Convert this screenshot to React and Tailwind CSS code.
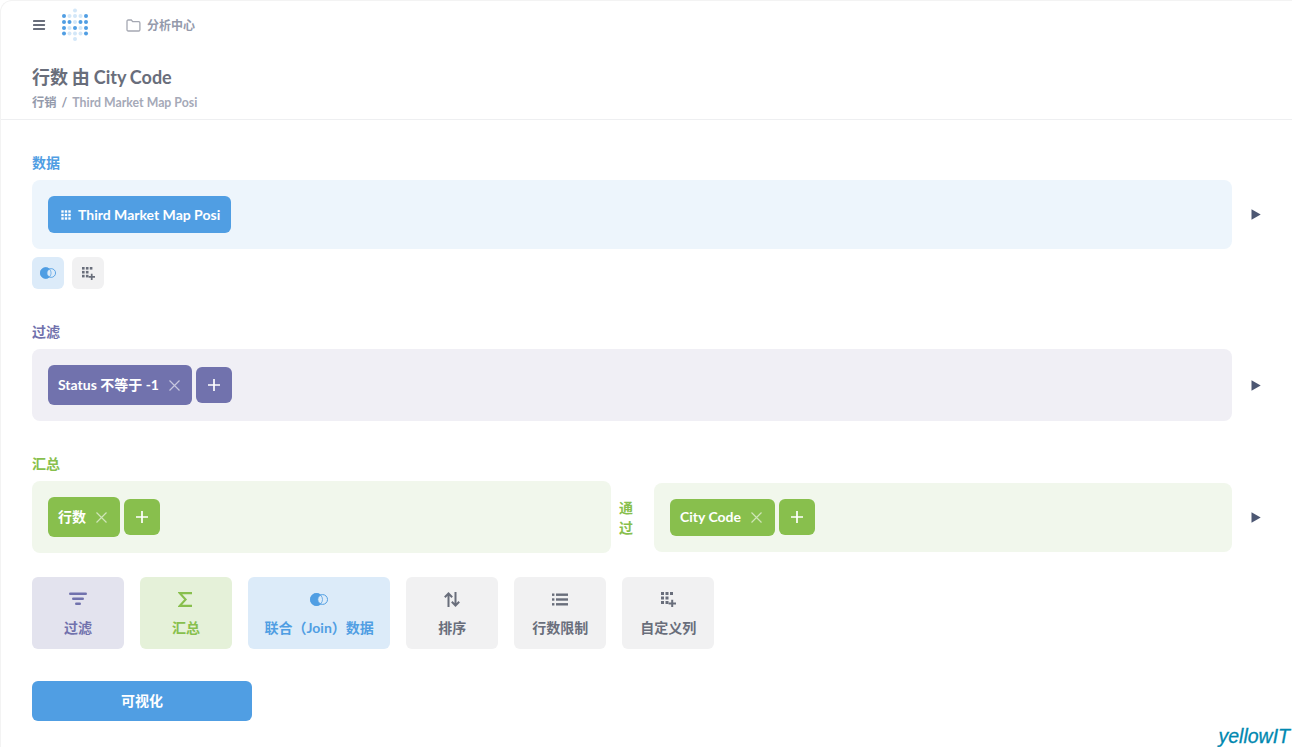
import React from "react";

const FONT = { fontFamily: "Lato, 'Noto Sans CJK SC', sans-serif" };

function Logo() {
  const cols = [64, 69.5, 75, 80.5, 86];
  const rows = [16, 22, 28, 33.5];
  const dark = new Set(["0-0","0-1","0-2","0-3","1-1","2-2","3-1","4-0","4-1","4-2","4-3"]);
  return (
    <svg width="30" height="34" viewBox="60 8 30 34" className="shrink-0">
      <circle cx="75" cy="10.5" r="2" fill="#509ee3" opacity="0.25" />
      <circle cx="75" cy="39" r="2" fill="#509ee3" opacity="0.25" />
      {cols.map((x, i) =>
        rows.map((y, j) => (
          <circle key={i + "-" + j} cx={x} cy={y} r="2" fill="#509ee3" opacity={dark.has(i + "-" + j) ? 1 : 0.25} />
        ))
      )}
    </svg>
  );
}

function Join({ className, lens }) {
  return (
    <svg viewBox="0 0 18 13" className={className}>
      <circle cx="6.5" cy="6.5" r="6.5" fill="#509ee3" />
      <circle cx="12.6" cy="6.5" r="4.9" fill={lens} stroke="#509ee3" strokeWidth="1" />
      <circle cx="6.5" cy="6.5" r="6" fill="none" stroke="#509ee3" strokeWidth="0.8" />
    </svg>
  );
}

function GridPlus({ className }) {
  return (
    <svg viewBox="0 0 15 15" className={className} fill="currentColor">
      <rect x="0" y="0" width="3" height="3" />
      <rect x="4.5" y="0" width="3" height="3" />
      <rect x="9" y="0" width="3" height="3" />
      <rect x="0" y="4.5" width="3" height="3" />
      <rect x="4.5" y="4.5" width="3" height="3" />
      <rect x="0" y="9" width="3" height="3" />
      <rect x="4.5" y="9" width="3" height="3" />
      <path d="M10.2 7.8h2v2.7h2.8v2h-2.8V15h-2v-2.5H7.6v-2h2.6z" />
    </svg>
  );
}

function Plus() {
  return (
    <svg width="14" height="14" viewBox="0 0 14 14" stroke="currentColor" strokeWidth="1.7" fill="none">
      <path d="M7 1v12M1 7h12" />
    </svg>
  );
}

function Close() {
  return (
    <svg width="11" height="11" viewBox="0 0 11 11" stroke="currentColor" strokeWidth="1.2" fill="none" className="opacity-60">
      <path d="M0.5 0.5l10 10M10.5 0.5l-10 10" />
    </svg>
  );
}

function Arrow() {
  return (
    <div className="w-[60px] flex justify-start shrink-0 pl-[19px]">
      <svg width="10" height="11" viewBox="0 0 10 11" fill="#4c5773">
        <path d="M0.5 0.3L9.7 5.5L0.5 10.7z" />
      </svg>
    </div>
  );
}

function Label({ children, className }) {
  return <div className={"text-sm font-bold leading-[18px] pt-px mb-[8px] " + className}>{children}</div>;
}

function ChipClose({ bg, label, pr = "pr-[13px]", h = "h-10", gap = "gap-[10px]" }) {
  return (
    <div className={"rounded-md flex items-center pl-[10px] text-sm font-bold text-white " + h + " " + pr + " " + gap + " " + bg}>
      <span>{label}</span>
      <Close />
    </div>
  );
}

function PlusBtn({ bg }) {
  return (
    <div className={"w-9 h-9 rounded-md flex items-center justify-center text-white " + bg}>
      <Plus />
    </div>
  );
}

function Action({ icon, label, className }) {
  return (
    <div className={"h-[72px] min-w-[92px] rounded-md flex flex-col items-center pt-[12px] px-[16.5px] text-sm font-bold " + className}>
      <div className="h-[20px] flex items-center justify-center">{icon}</div>
      <div className="mt-[9px] leading-[20px]">{label}</div>
    </div>
  );
}

export default function App() {
  return (
    <div style={FONT} className="relative w-[1292px] h-[747px] overflow-hidden bg-white rounded-tl-xl border-l border-t border-[#f3f3f3]">
      <header className="h-[118px] border-b border-[#eeeff1] pl-[31px] box-content">
        <div className="h-[48px] flex items-center">
          <svg width="14" height="12" viewBox="0 0 14 12" fill="#696e7b" className="shrink-0 ml-[1px]">
            <rect x="0" y="1" width="12" height="2" rx="0.4" />
            <rect x="0" y="5" width="12" height="2" rx="0.4" />
            <rect x="0" y="9" width="12" height="2" rx="0.4" />
          </svg>
          <div className="ml-[13px]"><Logo /></div>
          <svg width="15" height="13" viewBox="0 0 15 13" fill="none" stroke="#a5a8b2" strokeWidth="1.3" className="ml-[36px]">
            <path d="M1 2.2c0-.7.5-1.2 1.2-1.2h3.1l1.4 1.7h6c.7 0 1.2.5 1.2 1.2v6.9c0 .7-.5 1.2-1.2 1.2H2.2c-.7 0-1.2-.5-1.2-1.2z" />
          </svg>
          <span className="ml-[6px] pt-px text-xs font-bold text-[#949aab]">分析中心</span>
        </div>
        <h1 className="text-lg font-bold text-[#696e7b] leading-[24px] mt-[16px] [word-spacing:-0.5px]">行数 由 City Code</h1>
        <div className="text-[12.3px] font-bold text-[#949aab] leading-[16px] mt-[6px]">
          <span>行销</span>
          <span className="mx-[5px]">/</span>
          <span className="text-[#a5a9b8]">Third Market Map Posi</span>
        </div>
      </header>

      <main className="pl-[31px] pt-[33px]">
        <Label className="text-[#509ee3]">数据</Label>
        <div className="flex items-center">
          <div className="w-[1200px] h-[69px] rounded-lg bg-[#edf5fc] p-4">
            <div className="inline-flex items-center h-[37px] rounded-md bg-[#509ee3] text-white text-sm font-bold pl-[13px] pr-[11px]">
              <svg width="10" height="10" viewBox="0 0 10 10" fill="currentColor" className="mr-[7px]">
                {[0.3, 3.8, 7.3].map((x) =>
                  [0.3, 3.8, 7.3].map((y) => <rect key={x + "-" + y} x={x} y={y} width="2.4" height="2.4" />)
                )}
              </svg>
              Third Market Map Posi
            </div>
          </div>
          <Arrow />
        </div>
        <div className="flex gap-2 mt-2">
          <div className="w-8 h-8 rounded-md bg-[#dcebf9] flex items-center justify-center">
            <Join className="w-[16px] h-[12px]" lens="#dcebf9" />
          </div>
          <div className="w-8 h-8 rounded-md bg-[#f1f1f2] text-[#696e7b] flex items-center justify-center">
            <GridPlus className="w-[13px] h-[13px]" />
          </div>
        </div>

        <div className="mt-[33px]">
          <Label className="text-[#7172ad]">过滤</Label>
          <div className="flex items-center">
            <div className="w-[1200px] h-[72px] rounded-lg bg-[#f0eff5] p-4 flex items-center gap-1">
              <ChipClose bg="bg-[#7172ad]" label="Status 不等于 -1" pr="pr-[12px]" />
              <PlusBtn bg="bg-[#7172ad]" />
            </div>
            <Arrow />
          </div>
        </div>

        <div className="mt-[33px]">
          <Label className="text-[#88bf4d]">汇总</Label>
          <div className="flex items-center">
            <div className="w-[1200px] flex items-center">
              <div className="w-[579px] h-[72px] rounded-lg bg-[#f1f7ec] p-4 flex items-center gap-1">
                <ChipClose bg="bg-[#88bf4d]" label="行数" />
                <PlusBtn bg="bg-[#88bf4d]" />
              </div>
              <div className="w-[43px] pl-[8px] pt-[2px] text-sm font-bold text-[#88bf4d] leading-[20px]">
                <div>通</div>
                <div>过</div>
              </div>
              <div className="w-[578px] h-[69px] rounded-lg bg-[#f1f7ec] p-4 flex items-center gap-1">
                <ChipClose bg="bg-[#88bf4d]" label="City Code" h="h-[37px]" />
                <PlusBtn bg="bg-[#88bf4d]" />
              </div>
            </div>
            <Arrow />
          </div>
        </div>

        <div className="flex gap-4 mt-6">
          <Action
            className="bg-[#e3e3ee] text-[#7172ad]"
            label="过滤"
            icon={
              <svg width="18" height="14" viewBox="0 0 18 14" fill="currentColor">
                <rect x="0" y="0.5" width="18" height="2.6" rx="1.3" />
                <rect x="3" y="5.5" width="12" height="2.6" rx="1.3" />
                <rect x="6" y="10.5" width="6" height="2.6" rx="1.3" />
              </svg>
            }
          />
          <Action
            className="bg-[#e5f1d9] text-[#88bf4d]"
            label="汇总"
            icon={
              <svg width="14" height="15" viewBox="0 0 14 15" fill="none" stroke="currentColor" strokeWidth="2.1" className="mr-[2px]">
                <path d="M14 1.1H1.8L7.6 7.5L1.8 13.9H14" />
              </svg>
            }
          />
          <Action
            className="bg-[#dcebf9] text-[#509ee3]"
            label="联合（Join）数据"
            icon={<Join className="w-[18px] h-[13px]" lens="#dcebf9" />}
          />
          <Action
            className="bg-[#f1f1f2] text-[#696e7b]"
            label="排序"
            icon={
              <svg width="16" height="15" viewBox="0 0 16 15" fill="none" stroke="currentColor" strokeWidth="2">
                <path d="M4.5 15V1.5M0.8 5.2l3.7-3.7 3.7 3.7M11.5 0v13.5M7.8 9.8l3.7 3.7 3.7-3.7" />
              </svg>
            }
          />
          <Action
            className="bg-[#f1f1f2] text-[#696e7b]"
            label="行数限制"
            icon={
              <svg width="16" height="13" viewBox="0 0 16 13" fill="currentColor">
                <rect x="0" y="0.5" width="2.4" height="2.4" />
                <rect x="0" y="5.3" width="2.4" height="2.4" />
                <rect x="0" y="10.1" width="2.4" height="2.4" />
                <rect x="4" y="0.5" width="12" height="2.4" />
                <rect x="4" y="5.3" width="12" height="2.4" />
                <rect x="4" y="10.1" width="12" height="2.4" />
              </svg>
            }
          />
          <Action
            className="bg-[#f1f1f2] text-[#696e7b]"
            label="自定义列"
            icon={<GridPlus className="w-[15px] h-[15px] ml-[1px]" />}
          />
        </div>

        <div className="mt-8 w-[220px] h-10 rounded-md bg-[#509ee3] text-white text-sm font-bold flex items-center justify-center">
          可视化
        </div>
      </main>

      <div
        style={{ fontFamily: "'Liberation Sans', sans-serif" }}
        className="absolute right-[2px] bottom-[-1px] text-[19.5px] italic text-[#0088b0] leading-[24px] [-webkit-text-stroke:0.3px_#0088b0]"
      >
        yellowIT
      </div>
    </div>
  );
}
